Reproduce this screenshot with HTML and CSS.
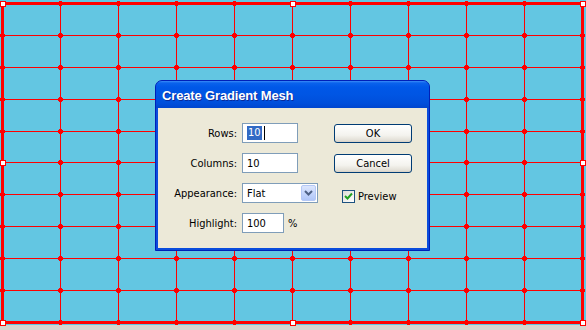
FILE: index.html
```html
<!DOCTYPE html>
<html>
<head>
<meta charset="utf-8">
<link rel="stylesheet" href="styles.css">
</head>
<body>
<div class="stage">
  <svg class="mesh" width="586" height="330" viewBox="0 0 586 330">
    <defs>
      <marker id="pt" markerUnits="userSpaceOnUse" markerWidth="5" markerHeight="5" refX="2.5" refY="2.5" viewBox="0 0 5 5">
        <path d="M1 0h3v1h1v3h-1v1h-3v-1h-1v-3h1z" fill="#ff0000"/>
      </marker>
    </defs>
    <rect width="586" height="325" fill="#63C6E2"/>
    <rect y="325" width="586" height="5" fill="#D6D3CE"/>
    <g stroke="#ff0000" fill="none" stroke-width="1">
      <path d="M60.5 3.5V322.5M118.5 3.5V322.5M176.5 3.5V322.5M234.5 3.5V322.5M292.5 3.5V322.5M350.5 3.5V322.5M408.5 3.5V322.5M466.5 3.5V322.5M524.5 3.5V322.5"/>
      <g marker-start="url(#pt)" marker-mid="url(#pt)" marker-end="url(#pt)">
        <polyline points="2.5,35.5 60.5,35.5 118.5,35.5 176.5,35.5 234.5,35.5 292.5,35.5 350.5,35.5 408.5,35.5 466.5,35.5 524.5,35.5 582.5,35.5"/>
        <polyline points="2.5,67.5 60.5,67.5 118.5,67.5 176.5,67.5 234.5,67.5 292.5,67.5 350.5,67.5 408.5,67.5 466.5,67.5 524.5,67.5 582.5,67.5"/>
        <polyline points="2.5,99.5 60.5,99.5 118.5,99.5 176.5,99.5 234.5,99.5 292.5,99.5 350.5,99.5 408.5,99.5 466.5,99.5 524.5,99.5 582.5,99.5"/>
        <polyline points="2.5,131.5 60.5,131.5 118.5,131.5 176.5,131.5 234.5,131.5 292.5,131.5 350.5,131.5 408.5,131.5 466.5,131.5 524.5,131.5 582.5,131.5"/>
        <polyline points="2.5,162.5 60.5,162.5 118.5,162.5 176.5,162.5 234.5,162.5 292.5,162.5 350.5,162.5 408.5,162.5 466.5,162.5 524.5,162.5 582.5,162.5"/>
        <polyline points="2.5,194.5 60.5,194.5 118.5,194.5 176.5,194.5 234.5,194.5 292.5,194.5 350.5,194.5 408.5,194.5 466.5,194.5 524.5,194.5 582.5,194.5"/>
        <polyline points="2.5,226.5 60.5,226.5 118.5,226.5 176.5,226.5 234.5,226.5 292.5,226.5 350.5,226.5 408.5,226.5 466.5,226.5 524.5,226.5 582.5,226.5"/>
        <polyline points="2.5,258.5 60.5,258.5 118.5,258.5 176.5,258.5 234.5,258.5 292.5,258.5 350.5,258.5 408.5,258.5 466.5,258.5 524.5,258.5 582.5,258.5"/>
        <polyline points="2.5,290.5 60.5,290.5 118.5,290.5 176.5,290.5 234.5,290.5 292.5,290.5 350.5,290.5 408.5,290.5 466.5,290.5 524.5,290.5 582.5,290.5"/>
      </g>
      <g stroke-width="3">
        <path d="M2.5 3.5V322.5M582.5 3.5V322.5"/>
        <g marker-start="url(#pt)" marker-mid="url(#pt)" marker-end="url(#pt)">
          <polyline points="2.5,3.5 60.5,3.5 118.5,3.5 176.5,3.5 234.5,3.5 292.5,3.5 350.5,3.5 408.5,3.5 466.5,3.5 524.5,3.5 582.5,3.5"/>
          <polyline points="2.5,322.5 60.5,322.5 118.5,322.5 176.5,322.5 234.5,322.5 292.5,322.5 350.5,322.5 408.5,322.5 466.5,322.5 524.5,322.5 582.5,322.5"/>
        </g>
      </g>
      <g fill="#ffffff">
        <rect x="0.5" y="1.5" width="5" height="5"/>
        <rect x="290.5" y="1.5" width="5" height="5"/>
        <rect x="580.5" y="1.5" width="5" height="5"/>
        <rect x="0.5" y="160.5" width="5" height="5"/>
        <rect x="580.5" y="160.5" width="5" height="5"/>
        <rect x="0.5" y="320.5" width="5" height="5"/>
        <rect x="290.5" y="320.5" width="5" height="5"/>
        <rect x="580.5" y="320.5" width="5" height="5"/>
      </g>
    </g>
  </svg>

  <div class="dialog">
    <div class="titlebar"><span class="title">Create Gradient Mesh</span></div>
    <div class="body">
      <div class="form">
        <span class="lbl">Rows:</span>
        <div class="field"><div class="input w56"><span class="sel">10</span><span class="caret"></span></div></div>
        <span class="lbl">Columns:</span>
        <div class="field"><div class="input w56">10</div></div>
        <span class="lbl">Appearance:</span>
        <div class="field">
          <div class="select">
            <span class="val">Flat</span>
            <span class="drop"><svg width="9" height="6" viewBox="0 0 9 6"><path d="M1 1l3.5 3.5L8 1" fill="none" stroke="#4D6185" stroke-width="2"/></svg></span>
          </div>
        </div>
        <span class="lbl">Highlight:</span>
        <div class="field"><div class="input w42">100</div><span class="pct">%</span></div>
      </div>
      <div class="side">
        <button class="btn">OK</button>
        <button class="btn">Cancel</button>
        <label class="check">
          <span class="box"><svg width="9" height="9" viewBox="0 0 9 9"><path d="M1 4l2.5 2.5L8 1.5" fill="none" stroke="#21A121" stroke-width="2"/></svg></span>
          <span>Preview</span>
        </label>
      </div>
    </div>
  </div>
</div>
</body>
</html>
```

FILE: styles.css
```css
html, body {
  margin: 0;
  padding: 0;
}
body {
  width: 586px;
  height: 330px;
  overflow: hidden;
  font-family: "DejaVu Sans Condensed", "DejaVu Sans", sans-serif;
  font-size: 11px;
  color: #000;
}
.stage {
  position: relative;
  width: 586px;
  height: 330px;
}
.mesh {
  display: block;
}
.dialog {
  position: absolute;
  left: 155px;
  top: 80px;
  width: 275px;
  height: 171px;
  box-sizing: border-box;
  border: 1px solid #0020B8;
  border-radius: 7px 7px 0 0;
  background: #0A4CDC;
  display: flex;
  flex-direction: column;
  overflow: hidden;
}
.titlebar {
  height: 27px;
  flex: none;
  display: flex;
  align-items: center;
  padding-left: 6px;
  background: linear-gradient(to bottom, #3A8CF8 0px, #0A62EC 2px, #0058E8 6px, #0055E3 14px, #004FDB 22px, #0046CF 27px);
}
.title {
  color: #fff;
  font-family: "Liberation Sans", sans-serif;
  font-weight: bold;
  font-size: 13px;
  letter-spacing: -0.15px;
  text-shadow: 1px 1px 0 #0A2A9A;
  padding-top: 1px;
}
.body {
  flex: 1;
  margin: 0 2px 2px;
  background: #ECE9D8;
  display: flex;
  padding-top: 15px;
}
.form {
  display: grid;
  grid-template-columns: 79px auto;
  column-gap: 5px;
  row-gap: 10px;
  align-items: center;
  align-content: start;
}
.lbl {
  text-align: right;
}
.field {
  display: flex;
  align-items: center;
  gap: 4px;
}
.input {
  height: 20px;
  box-sizing: border-box;
  border: 1px solid #7F9DB9;
  background: #fff;
  display: flex;
  align-items: center;
  padding-left: 4px;
}
.w56 { width: 56px; }
.w42 { width: 42px; }
.sel {
  background: #316AC5;
  color: #fff;
  line-height: 14px;
  padding: 0 1px;
}
.caret {
  width: 1px;
  height: 14px;
  background: #000;
  margin-left: 2px;
}
.select {
  width: 76px;
  height: 20px;
  box-sizing: border-box;
  border: 1px solid #7F9DB9;
  background: #fff;
  display: flex;
  align-items: stretch;
  padding: 1px;
}
.val {
  flex: 1;
  display: flex;
  align-items: center;
  padding-left: 3px;
}
.drop {
  width: 15px;
  box-sizing: border-box;
  border: 1px solid #B4C8F6;
  border-radius: 2px;
  background: linear-gradient(to bottom, #DCE6FD, #C1D3FB 60%, #B0C6F8);
  display: flex;
  align-items: center;
  justify-content: center;
}
.pct {
  padding-left: 0;
}
.side {
  margin-left: 16px;
  display: flex;
  flex-direction: column;
  align-items: flex-start;
  padding-top: 1px;
}
.btn {
  width: 78px;
  height: 19px;
  box-sizing: border-box;
  border: 1px solid #003C74;
  border-radius: 3px;
  background: linear-gradient(to bottom, #FFFFFF, #F4F3EE 60%, #E2DFD6 90%, #D6D0C5);
  font: inherit;
  color: #000;
  padding: 0;
}
.btn + .btn {
  margin-top: 11px;
}
.check {
  margin-top: 17px;
  margin-left: 8px;
  display: flex;
  align-items: center;
  gap: 3px;
}
.box {
  width: 13px;
  height: 13px;
  box-sizing: border-box;
  border: 1px solid #1C5180;
  background: linear-gradient(135deg, #DCDCD7, #FFFFFF);
  display: flex;
  align-items: center;
  justify-content: center;
}
.box svg {
  display: block;
}
```
